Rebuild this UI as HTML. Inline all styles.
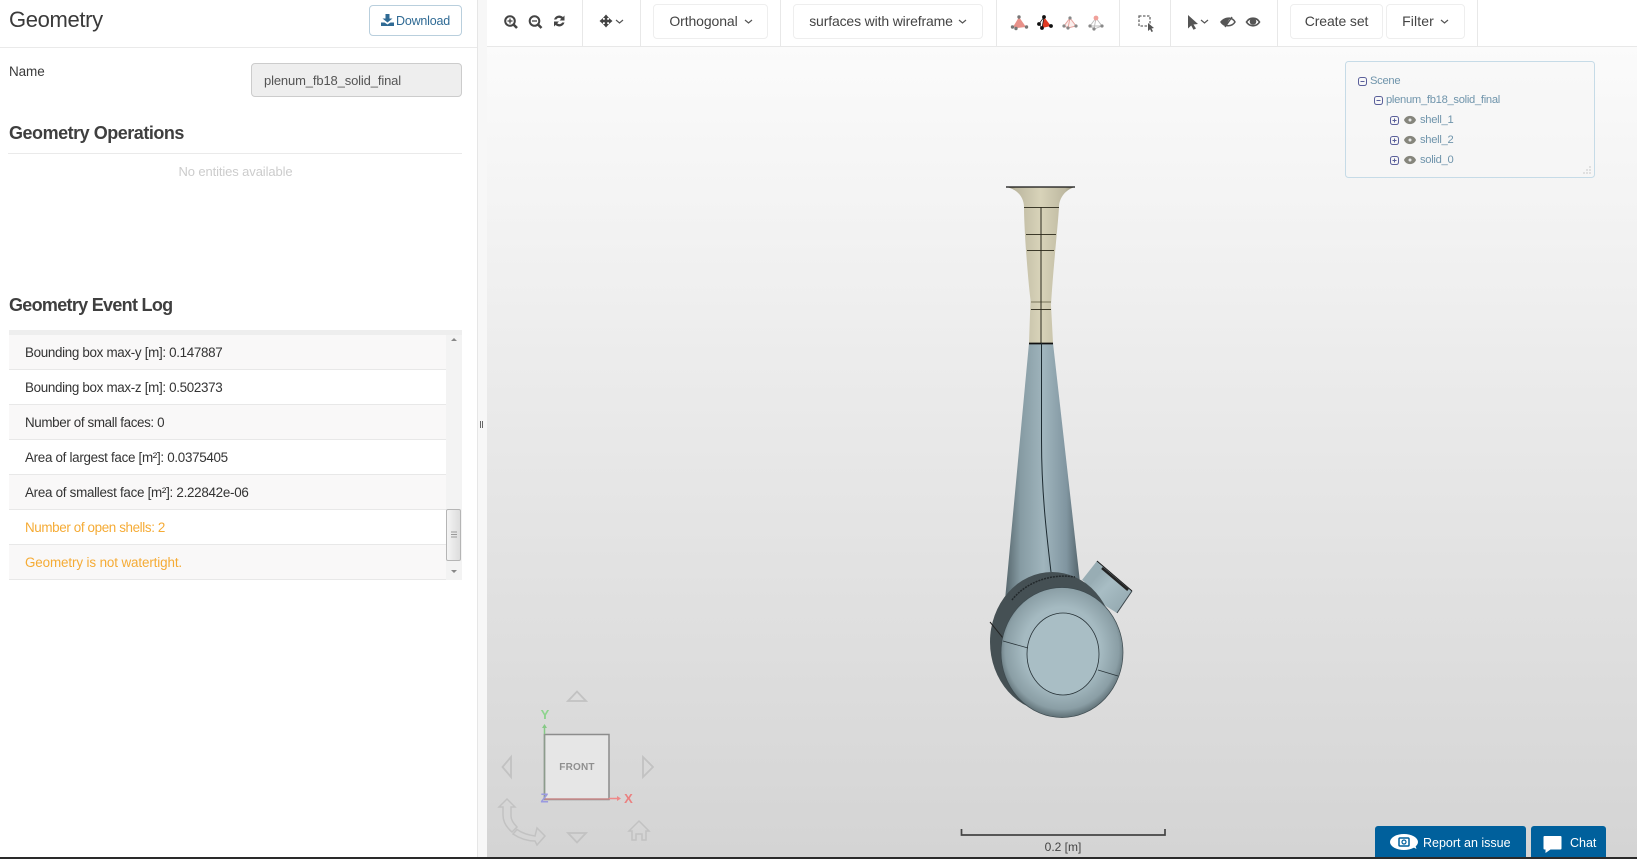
<!DOCTYPE html>
<html><head><meta charset="utf-8"><style>
html,body{margin:0;padding:0;background:#fff}
body{width:1637px;height:859px;overflow:hidden;position:relative;font-family:"Liberation Sans",sans-serif;color:#333}
.a{position:absolute}
.t{position:absolute;white-space:nowrap;line-height:20px;height:20px}
.btn{position:absolute;box-sizing:border-box;background:#fff;border:1px solid #eee;border-radius:4px;height:35px;top:4px;font-size:14px;color:#444;text-align:center;line-height:32px}
.sep{position:absolute;top:0;width:1px;height:47px;background:#e8e8e8}
.row{position:absolute;left:9px;width:437px;height:35px;box-sizing:border-box;border-bottom:1px solid #e8e8e8;padding-left:16px;font-size:13.4px;line-height:36px;color:#333;white-space:nowrap}
.odd{background:#f9f8f8}.warn{color:#f5ab35}
.tree{color:#6f94ab;font-size:11.2px;letter-spacing:-.29px}
</style></head><body>
<!-- viewport -->
<div class="a" style="left:487px;top:47px;width:1150px;height:810px;background:linear-gradient(#fbfbfb,#d4d4d4)"></div>
<!-- left panel -->
<div class="a" style="left:0;top:0;width:477px;height:857px;background:#fff"></div>
<div class="a" style="left:477px;top:0;width:10px;height:857px;background:#f7f7f7;border-left:1px solid #e6e6e6;box-sizing:border-box"></div>
<div class="a" style="left:480px;top:421px;width:1px;height:7px;background:#666"></div>
<div class="a" style="left:482px;top:421px;width:1px;height:7px;background:#666"></div>
<div class="a" style="left:0;top:47px;width:477px;height:1px;background:#eaeaea"></div>
<div class="t" style="left:9px;top:10px;font-size:22px;color:#3a3a3a;letter-spacing:-.35px">Geometry</div>
<div class="a" style="left:369px;top:5px;width:93px;height:31px;box-sizing:border-box;border:1px solid #b9cfdd;border-radius:4px;font-size:12.5px;line-height:31px;color:#2f6a94;padding-left:26px;letter-spacing:-.2px">Download</div>
<svg class="a" style="left:381px;top:14px" width="13" height="12" viewBox="0 0 13 12"><path d="M4.500 0h4v4.500h3L6.500 8.500 1.500 4.500h3z M0 8.500h3.500l3 2 3-2H13V12H0z" fill="#2f6a94"/></svg>
<div class="t" style="left:9px;top:62px;font-size:13.500px;color:#3a3a3a;letter-spacing:-.1px">Name</div>
<div class="a" style="left:251px;top:63px;width:211px;height:34px;box-sizing:border-box;border:1px solid #ccc;border-radius:4px;background:#eee;font-size:13px;line-height:33px;color:#555;padding-left:12px;letter-spacing:-.14px">plenum_fb18_solid_final</div>
<div class="t" style="left:9px;top:123px;font-size:18px;font-weight:bold;color:#3f3f3f;letter-spacing:-.48px">Geometry Operations</div>
<div class="a" style="left:8px;top:153px;width:454px;height:1px;background:#eaeaea"></div>
<div class="t" style="left:0;width:471px;text-align:center;top:162px;font-size:13px;color:#ccc;letter-spacing:-.11px">No entities available</div>
<div class="t" style="left:9px;top:295px;font-size:18px;font-weight:bold;color:#3f3f3f;letter-spacing:-.7px">Geometry Event Log</div>
<div class="a" style="left:9px;top:330px;width:453px;height:5px;background:#eee"></div>
<div class="row odd" style="top:335px;letter-spacing:-.32px">Bounding box max-y [m]: 0.147887</div>
<div class="row" style="top:370px;letter-spacing:-.32px">Bounding box max-z [m]: 0.502373</div>
<div class="row odd" style="top:405px;letter-spacing:-.37px">Number of small faces: 0</div>
<div class="row" style="top:440px;letter-spacing:-.3px">Area of largest face [m²]: 0.0375405</div>
<div class="row odd" style="top:475px;letter-spacing:-.28px">Area of smallest face [m²]: 2.22842e-06</div>
<div class="row warn" style="top:510px;letter-spacing:-.37px">Number of open shells: 2</div>
<div class="row odd warn" style="top:545px;letter-spacing:-.11px">Geometry is not watertight.</div>
<div class="a" style="left:446px;top:335px;width:16px;height:245px;background:#f3f3f3"></div>
<div class="a" style="left:446px;top:509px;width:15px;height:52px;box-sizing:border-box;background:linear-gradient(90deg,#f4f4f4,#ddd);border:1px solid #b5b5b5;border-radius:2px"></div>
<svg class="a" style="left:446px;top:335px" width="16" height="245"><path d="M5 6l3-3 3 3z M5 235l3 3 3-3z" fill="#888"/><path d="M5 197h6M5 199.500h6M5 202h6" stroke="#999" fill="none"/></svg>

<!-- toolbar -->
<div class="a" style="left:487px;top:0;width:1150px;height:47px;background:#fff;border-bottom:1px solid #e8e8e8;box-sizing:border-box"></div>
<div class="sep" style="left:582px"></div><div class="sep" style="left:640px"></div><div class="sep" style="left:780px"></div><div class="sep" style="left:996px"></div><div class="sep" style="left:1119px"></div><div class="sep" style="left:1170px"></div><div class="sep" style="left:1277px"></div><div class="sep" style="left:1477px"></div>
<div class="btn" style="left:653px;width:115px;padding-right:14px;letter-spacing:-.1px">Orthogonal</div>
<div class="btn" style="left:793px;width:190px;padding-right:14px;letter-spacing:-.15px">surfaces with wireframe</div>
<div class="btn" style="left:1290px;width:93px;letter-spacing:-.1px">Create set</div>
<div class="btn" style="left:1386px;width:79px;padding-right:15px;letter-spacing:.1px">Filter</div>

<svg class="a" style="left:0;top:0" width="1637" height="859" viewBox="0 0 1637 859">
<defs>
<linearGradient id="bg" x1="0" x2="1"><stop offset="0" stop-color="#85826a"/><stop offset=".14" stop-color="#bdb8a0"/><stop offset=".5" stop-color="#d8d3b9"/><stop offset=".86" stop-color="#bdb8a0"/><stop offset="1" stop-color="#85826a"/></linearGradient>
<linearGradient id="cone" x1="0" x2="1"><stop offset="0" stop-color="#56666c"/><stop offset=".2" stop-color="#869ba3"/><stop offset=".5" stop-color="#a0b5bd"/><stop offset=".8" stop-color="#8095a0"/><stop offset="1" stop-color="#4c5b61"/></linearGradient>
<radialGradient id="sph" cx=".5" cy=".47" r=".53"><stop offset="0" stop-color="#a9bfc6"/><stop offset=".6" stop-color="#a5bac1"/><stop offset=".88" stop-color="#8a9ea5"/><stop offset="1" stop-color="#5f7076"/></radialGradient>
<linearGradient id="pipe" x1="0" x2="1" y1="0" y2="1"><stop offset="0" stop-color="#7f949b"/><stop offset=".5" stop-color="#a8bdc4"/><stop offset="1" stop-color="#8fa4ab"/></linearGradient>
</defs>
<!-- chevrons -->
<g fill="none" stroke="#555" stroke-width="1.200"><path d="M616 20l3.500 3 3.500-3M745 20l3.500 3 3.500-3M959 20l3.500 3 3.500-3M1441 20l3.500 3 3.500-3M1201 20l3.500 3 3.500-3"/></g>
<!-- zoom icons -->
<g fill="none" stroke="#444" stroke-width="2"><circle cx="510" cy="21" r="4.800"/><path d="M513.500 24.500l3.500 3.500" stroke-width="2.600"/><path d="M507.500 21h5M510 18.500v5" stroke-width="1.300"/>
<circle cx="534.500" cy="21" r="4.800"/><path d="M538 24.500l3.500 3.500" stroke-width="2.600"/><path d="M532 21h5" stroke-width="1.300"/></g>
<path d="M554 19.500a5.500 5.500 0 0 1 9-2.500l1.500-1.500v5h-5l1.800-1.800a3.200 3.200 0 0 0-5 .8z M564.500 22.500a5.500 5.500 0 0 1-9 2.500l-1.500 1.500v-5h5l-1.800 1.800a3.200 3.200 0 0 0 5-.8z" fill="#444"/>
<!-- move -->
<path d="M606 17v8M602 21h8" stroke="#444" stroke-width="2.400"/>
<path d="M606 14.500l3 3.500h-6zM606 27.500l3-3.500h-6zM599.500 21l3.500-3v6zM612.500 21l-3.500-3v6z" fill="#444"/>
<!-- tetra icons -->
<path d="M1019 17L1026 27 1017 28 1013 27z" fill="#e8918a"/><g fill="#777"><circle cx="1019" cy="17" r="1.700"/><circle cx="1026.500" cy="27" r="1.700"/><circle cx="1012.500" cy="27" r="1.700"/><circle cx="1016" cy="28.500" r="1.700"/></g>
<path d="M1044 17L1051 26 1042 28z" fill="#e03a22"/><path d="M1044 17L1039 24 1042 28z" fill="#fff" stroke="#111" stroke-width=".7"/><g fill="#111"><circle cx="1044" cy="17" r="1.900"/><circle cx="1051" cy="26" r="1.900"/><circle cx="1039" cy="24" r="1.900"/><circle cx="1042" cy="28" r="1.900"/></g>
<path d="M1070 18L1076 26 1068 28 1064 26z M1070 18L1068 28" fill="#fbeeec" stroke="#e8a49e" stroke-width="1"/><g fill="#888"><circle cx="1070" cy="18" r="1.600"/><circle cx="1076" cy="26" r="1.600"/><circle cx="1064" cy="26" r="1.600"/><circle cx="1068" cy="28" r="1.600"/></g>
<path d="M1096 18L1102 26 1094 29 1090 26z M1096 18L1094 29M1090 26H1102" fill="none" stroke="#bbb" stroke-width=".9"/><circle cx="1096" cy="18" r="2.400" fill="#f0a09a"/><g fill="#888"><circle cx="1102" cy="26" r="1.600"/><circle cx="1090" cy="26" r="1.600"/><circle cx="1094" cy="29" r="1.600"/></g>
<!-- selection -->
<rect x="1139" y="16" width="11" height="10" fill="none" stroke="#666" stroke-width="1.300" stroke-dasharray="2.500 1.500"/>
<path d="M1148 23l6 5-2.500.5 1.500 2.800-1.500.7-1.400-2.800-2.100 1.800z" fill="#555"/>
<!-- cursor -->
<path d="M1188 15l10 9-4.500.5 2.500 4-2.500 1.300-2.300-4.300-3.200 3z" fill="#555"/>
<!-- eye slash -->
<path d="M1221 22c3-4 11-6 14 0-3 5-11 5-14 0z" fill="none" stroke="#555" stroke-width="1.500"/><path d="M1221 22c2-3 6-5 9-4.500l-4 8c-2-.5-4-2-5-3.500z" fill="#555"/><path d="M1225 27l7-10" stroke="#555" stroke-width="1.500"/>
<!-- eye -->
<path d="M1246.500 22c3-5 10-5 13 0-3 5-10 5-13 0z" fill="none" stroke="#555" stroke-width="1.700"/><circle cx="1253" cy="21.500" r="3.300" fill="#555"/>

<!-- tree panel -->
<rect x="1345.500" y="61.500" width="249" height="116" rx="3" fill="#f6f7f7" fill-opacity=".7" stroke="#c6dbe7"/>
<g fill="none" stroke="#5a5f9a" stroke-width="1"><rect x="1358.500" y="77.500" width="8" height="8" rx="2.200"/><path d="M1360.500 81.500h4"/><rect x="1374.500" y="96.500" width="8" height="8" rx="2.200"/><path d="M1376.500 100.500h4"/>
<rect x="1390.500" y="116.500" width="8" height="8" rx="2.200"/><path d="M1392.500 120.500h4M1394.500 118.500v4"/><rect x="1390.500" y="136.500" width="8" height="8" rx="2.200"/><path d="M1392.500 140.500h4M1394.500 138.500v4"/><rect x="1390.500" y="156.500" width="8" height="8" rx="2.200"/><path d="M1392.500 160.500h4M1394.500 158.500v4"/></g>
<g fill="#85857c"><path d="M1404 120c2-5.500 10-5.500 12 0-2 5.500-10 5.500-12 0zM1404 140c2-5.500 10-5.500 12 0-2 5.500-10 5.500-12 0zM1404 160c2-5.500 10-5.500 12 0-2 5.500-10 5.500-12 0z"/></g><g fill="#e8e8e8"><circle cx="1410" cy="120" r="1.500"/><circle cx="1410" cy="140" r="1.500"/><circle cx="1410" cy="160" r="1.500"/></g>
<g fill="#aaa"><circle cx="1590" cy="170" r=".6"/><circle cx="1590" cy="173" r=".6"/><circle cx="1587" cy="173" r=".6"/><circle cx="1584" cy="173" r=".6"/><circle cx="1587" cy="170" r=".6"/><circle cx="1590" cy="167" r=".6"/></g>

<!-- geometry -->
<path d="M1029 343L1005 600 1082 600 1053 343z" fill="url(#cone)"/>
<path d="M1006 187C1018 189 1024 198 1024 207C1024 225 1027 270 1030.500 300L1029 343H1053L1051 305C1053 270 1058 225 1059 207C1059 198 1066 189 1075 187z" fill="url(#bg)"/>
<path d="M1006 187H1075" stroke="#111" stroke-width="1.300"/>
<path d="M1024 207.500H1059M1026 234.500H1056M1027 250.500H1054M1031 309.500H1051" stroke="#3d3a2a" stroke-width=".9"/>
<path d="M1031 302H1051" stroke="#8a866c" stroke-width="1.300"/>
<path d="M1029 343.500H1053" stroke="#111" stroke-width="1.800"/>
<path d="M1041 207V343" stroke="#2a281c" stroke-width="1"/>
<path d="M1041.500 343V440C1041.500 490 1046 530 1051 572" fill="none" stroke="#1c2a30" stroke-width="1"/>
<!-- pipe -->
<path d="M1097 561L1132 591 1117 613 1080 590z" fill="url(#pipe)"/>
<path d="M1097 561L1103 566 1090 586 1082 580z" fill="#98adb4"/>
<path d="M1097 561L1132 591" stroke="#1a1a1a" stroke-width="1"/>
<path d="M1102 568L1128 590" stroke="#222" stroke-width="2.500"/>
<path d="M1132 591L1117 613" stroke="#3a4449" stroke-width="1"/>
<!-- dark ring -->
<ellipse cx="1052" cy="642" rx="62" ry="70" fill="#455054"/>
<path d="M1012 600C1025 583 1050 573 1075 577" fill="none" stroke="#23292c" stroke-width="1.500" stroke-dasharray="2 1"/>
<path d="M990 622L1003 638" stroke="#222" stroke-width="1"/>
<!-- sphere -->
<ellipse cx="1062" cy="652.500" rx="61" ry="65" fill="url(#sph)"/>
<ellipse cx="1062" cy="652.500" rx="61" ry="65" fill="none" stroke="#3d4a4f" stroke-width=".7"/>
<ellipse cx="1063" cy="654" rx="36" ry="41" fill="#a9bec5" stroke="#263136" stroke-width=".8"/>
<path d="M1003 641L1028 648M1098 670L1118 676" stroke="#2a353a" stroke-width=".8"/>

<!-- gizmo -->
<g fill="none" stroke="#c2c2c2" stroke-width="1.800">
<path d="M568 701L577 691.500 586 701z"/><path d="M511 757L502.500 767 511 777z"/><path d="M643 757L653 767 643 777z"/><path d="M568 833L577 842.500 586 833z"/>
<path d="M639 821L649 831h-3v9h-4v-6h-6v6h-4v-9h-3z" stroke-width="1.500"/>
<path d="M507 799L515 807H511V816C511 820 514 824 517 827L512 832C506 827 503 821 503 815V807H499Z" stroke-width="1.500"/>
<path d="M517 829.500C522 833 528 835 535 836L537 828 545 836 537 845 535 841C527 841 519 838 513 834Z" stroke-width="1.500"/>
</g>
<rect x="544.500" y="734.500" width="64.500" height="65" fill="#e6e6e6" stroke="#8c8c8c" stroke-width="1.500"/>
<text x="577" y="770" font-family="Liberation Sans" font-size="10" font-weight="bold" fill="#8f8f8f" text-anchor="middle" letter-spacing=".2">FRONT</text>
<path d="M544.500 734V726" stroke="#86c986" stroke-width="1.500"/><path d="M542 728l2.500-4 2.500 4z" fill="#86c986"/>
<path d="M544.500 799H609" stroke="#c98a8a" stroke-width="1.500"/><path d="M609 798.500h10" stroke="#e88" stroke-width="1.500"/><path d="M617 796l4 2.500-4 2.500z" fill="#e88"/>
<path d="M544.500 734V799" stroke="#8c9c8c" stroke-width="1.500"/>
<text x="545" y="719" font-family="Liberation Sans" font-size="13" font-weight="bold" fill="#8fd48f" text-anchor="middle">Y</text>
<text x="628.500" y="803" font-family="Liberation Sans" font-size="13" font-weight="bold" fill="#ea8080" text-anchor="middle">X</text>
<text x="544.500" y="802.500" font-family="Liberation Sans" font-size="13" font-weight="bold" fill="#9a9ae0" text-anchor="middle">Z</text>

<!-- scale -->
<path d="M961.500 829V835H1165V829" fill="none" stroke="#444" stroke-width="1.700"/>
<text x="1063" y="851" font-family="Liberation Sans" font-size="12" fill="#444" text-anchor="middle">0.2 [m]</text>
</svg>

<!-- tree text -->
<div class="t tree" style="left:1370px;top:71px">Scene</div>
<div class="t tree" style="left:1386px;top:90px">plenum_fb18_solid_final</div>
<div class="t tree" style="left:1420px;top:110px">shell_1</div>
<div class="t tree" style="left:1420px;top:130px">shell_2</div>
<div class="t tree" style="left:1420px;top:150px">solid_0</div>

<!-- report / chat -->
<div class="a" style="left:1375px;top:826px;width:151px;height:31px;background:#00609c;border-radius:3px 3px 0 0"></div>
<div class="a" style="left:1531px;top:826px;width:75px;height:31px;background:#00609c;border-radius:3px 3px 0 0"></div>
<div class="t" style="left:1423px;top:833px;font-size:12.500px;color:#fff">Report an issue</div>
<div class="t" style="left:1570px;top:833px;font-size:12.500px;color:#fff">Chat</div>
<svg class="a" style="left:1375px;top:826px" width="231" height="31">
<ellipse cx="29" cy="16" rx="14" ry="8" fill="#fff"/><path d="M36 20l5.500 3-2-6z" fill="#fff"/>
<rect x="24" y="12" width="10" height="8" rx="1" fill="none" stroke="#00609c" stroke-width="1.500"/><circle cx="29" cy="16" r="2" fill="none" stroke="#00609c" stroke-width="1.200"/>
<path d="M169.500 10h16a1 1 0 0 1 1 1v11.500a1 1 0 0 1-1 1h-10l-5 3.500v-3.500h-1a1 1 0 0 1-1-1V11a1 1 0 0 1 1-1z" fill="#fff"/>
</svg>
<!-- bottom line -->
<div class="a" style="left:0;top:857px;width:1637px;height:2px;background:#2a2a2a"></div>
</body></html>
